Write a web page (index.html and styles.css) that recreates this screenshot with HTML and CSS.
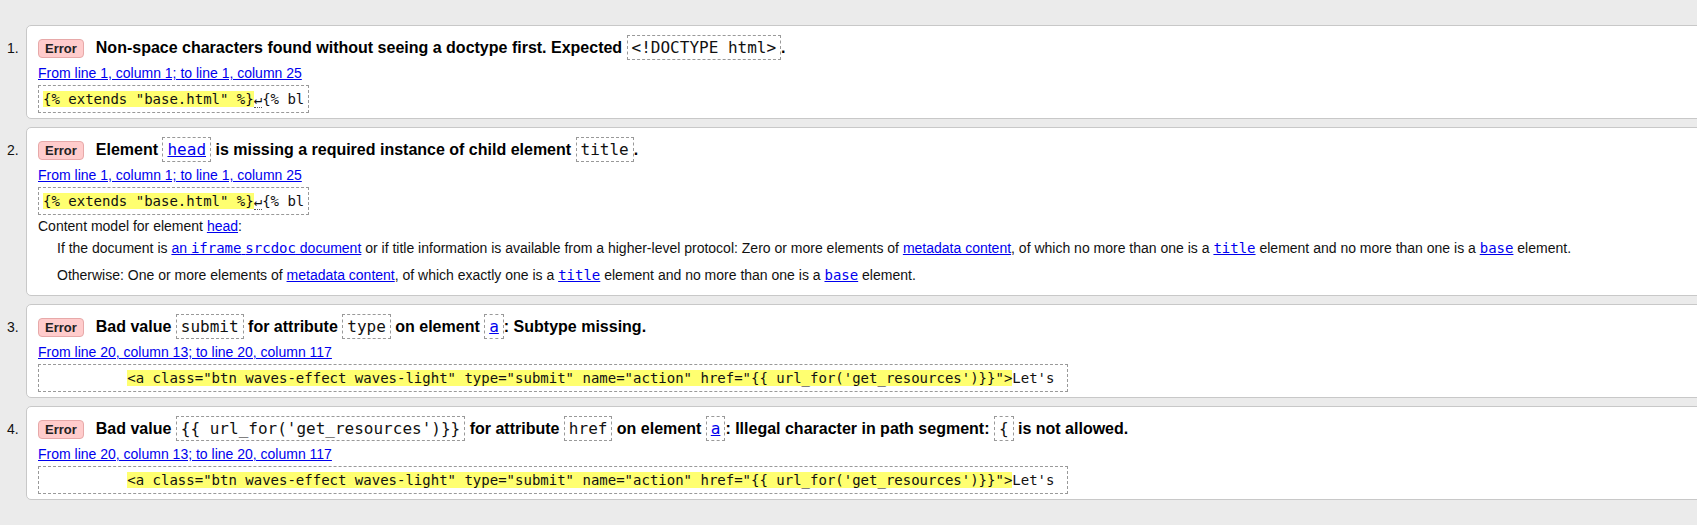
FILE: index.html
```html
<!DOCTYPE html>
<html lang="en">
<head>
<meta charset="utf-8">
<title>Validation results</title>
<link rel="stylesheet" href="styles.css">
</head>
<body>
<ol class="messages">
  <li class="msg">
    <span class="num">1.</span>
    <div class="card">
      <p class="head"><strong class="badge">Error</strong><span class="text">Non-space characters found without seeing a doctype first. Expected <code class="tok">&lt;!DOCTYPE html&gt;</code>.</span></p>
      <p class="loc"><a href="#">From line 1, column 1; to line 1, column 25</a></p>
      <p class="extract"><code><b>{% extends "base.html" %}</b><span class="lf">↵</span>{% bl</code></p>
    </div>
  </li>
  <li class="msg">
    <span class="num">2.</span>
    <div class="card">
      <p class="head"><strong class="badge">Error</strong><span class="text">Element <code class="tok"><a href="#">head</a></code> is missing a required instance of child element <code class="tok">title</code>.</span></p>
      <p class="loc"><a href="#">From line 1, column 1; to line 1, column 25</a></p>
      <p class="extract"><code><b>{% extends "base.html" %}</b><span class="lf">↵</span>{% bl</code></p>
      <dl class="model">
        <dt>Content model for element <a href="#">head</a>:</dt>
        <dd>If the document is <a href="#">an <span class="mono">iframe</span> <span class="mono">srcdoc</span> document</a> or if title information is available from a higher-level protocol: Zero or more elements of <a href="#">metadata content</a>, of which no more than one is a <a href="#" class="mono">title</a> element and no more than one is a <a href="#" class="mono">base</a> element.</dd>
        <dd class="second">Otherwise: One or more elements of <a href="#">metadata content</a>, of which exactly one is a <a href="#" class="mono">title</a> element and no more than one is a <a href="#" class="mono">base</a> element.</dd>
      </dl>
    </div>
  </li>
  <li class="msg">
    <span class="num">3.</span>
    <div class="card">
      <p class="head"><strong class="badge">Error</strong><span class="text">Bad value <code class="tok">submit</code> for attribute <code class="tok">type</code> on element <code class="tok"><a href="#">a</a></code>: Subtype missing.</span></p>
      <p class="loc"><a href="#">From line 20, column 13; to line 20, column 117</a></p>
      <p class="extract"><code>          <b>&lt;a class="btn waves-effect waves-light" type="submit" name="action" href="{{ url_for('get_resources')}}"&gt;</b>Let's </code></p>
    </div>
  </li>
  <li class="msg">
    <span class="num">4.</span>
    <div class="card">
      <p class="head"><strong class="badge">Error</strong><span class="text">Bad value <code class="tok">{{ url_for('get_resources')}}</code> for attribute <code class="tok">href</code> on element <code class="tok"><a href="#">a</a></code>: Illegal character in path segment: <code class="tok">{</code> is not allowed.</span></p>
      <p class="loc"><a href="#">From line 20, column 13; to line 20, column 117</a></p>
      <p class="extract"><code>          <b>&lt;a class="btn waves-effect waves-light" type="submit" name="action" href="{{ url_for('get_resources')}}"&gt;</b>Let's </code></p>
    </div>
  </li>
</ol>
</body>
</html>
```
FILE: styles.css
```css
html, body {
  margin: 0;
  padding: 0;
  overflow: hidden;
}

body {
  background: #ebebeb;
  font-family: "Liberation Sans", Arial, sans-serif;
  font-size: 14px;
  color: #111;
  width: 1697px;
  height: 525px;
}

.messages {
  list-style: none;
  margin: 25px 0 0 0;
  padding: 0;
}

.msg {
  display: grid;
  grid-template-columns: 26px 1fr;
  margin-bottom: 8px;
}

.num {
  padding: 13px 0 0 7px;
  font-size: 14px;
  line-height: 20px;
  color: #111;
}

.card {
  min-width: 0;
  margin-right: -20px;
  background: #fff;
  border: 1px solid #c8c8c8;
  border-radius: 5px;
  padding: 9px 0 5px 11px;
}

.head {
  margin: 0;
  display: flex;
  align-items: center;
  height: 26px;
  font-size: 16px;
  line-height: 26px;
  font-weight: bold;
  color: #000;
  white-space: nowrap;
}

.badge {
  display: inline-block;
  font-size: 13px;
  line-height: 15px;
  padding: 1px 6px;
  border: 1px solid #e7a9a9;
  background: #fcc;
  border-radius: 4px;
  color: #222;
  margin-right: 12px;
}

.tok {
  font-family: "DejaVu Sans Mono", monospace;
  font-weight: normal;
  font-size: 16px;
  border: 1px dashed #999;
  padding: 2px 4px;
  color: #111;
}

a {
  color: #00e;
  text-decoration: underline;
}

.loc {
  margin: 2px 0 0;
  font-size: 14px;
  line-height: 20px;
}

.extract {
  margin: 2px 0 0;
  line-height: 18px;
}

.extract code {
  display: inline-block;
  border: 1px dashed #999;
  padding: 4px 4px;
  font-family: "DejaVu Sans Mono", monospace;
  font-size: 14px;
  line-height: 18px;
  white-space: pre;
  color: #111;
}

.extract b {
  font-weight: normal;
  background: #ffff70;
}

.lf {
  border-bottom: 1px dotted #555;
}

.mono {
  font-family: "DejaVu Sans Mono", monospace;
}

.model {
  margin: 1px 0 5px;
  line-height: 20px;
  font-size: 14px;
}

.model dt {
  margin: 0;
}

.model dd {
  margin: 2px 0 0 19px;
}

.model dd.second {
  margin-top: 7px;
}
```
